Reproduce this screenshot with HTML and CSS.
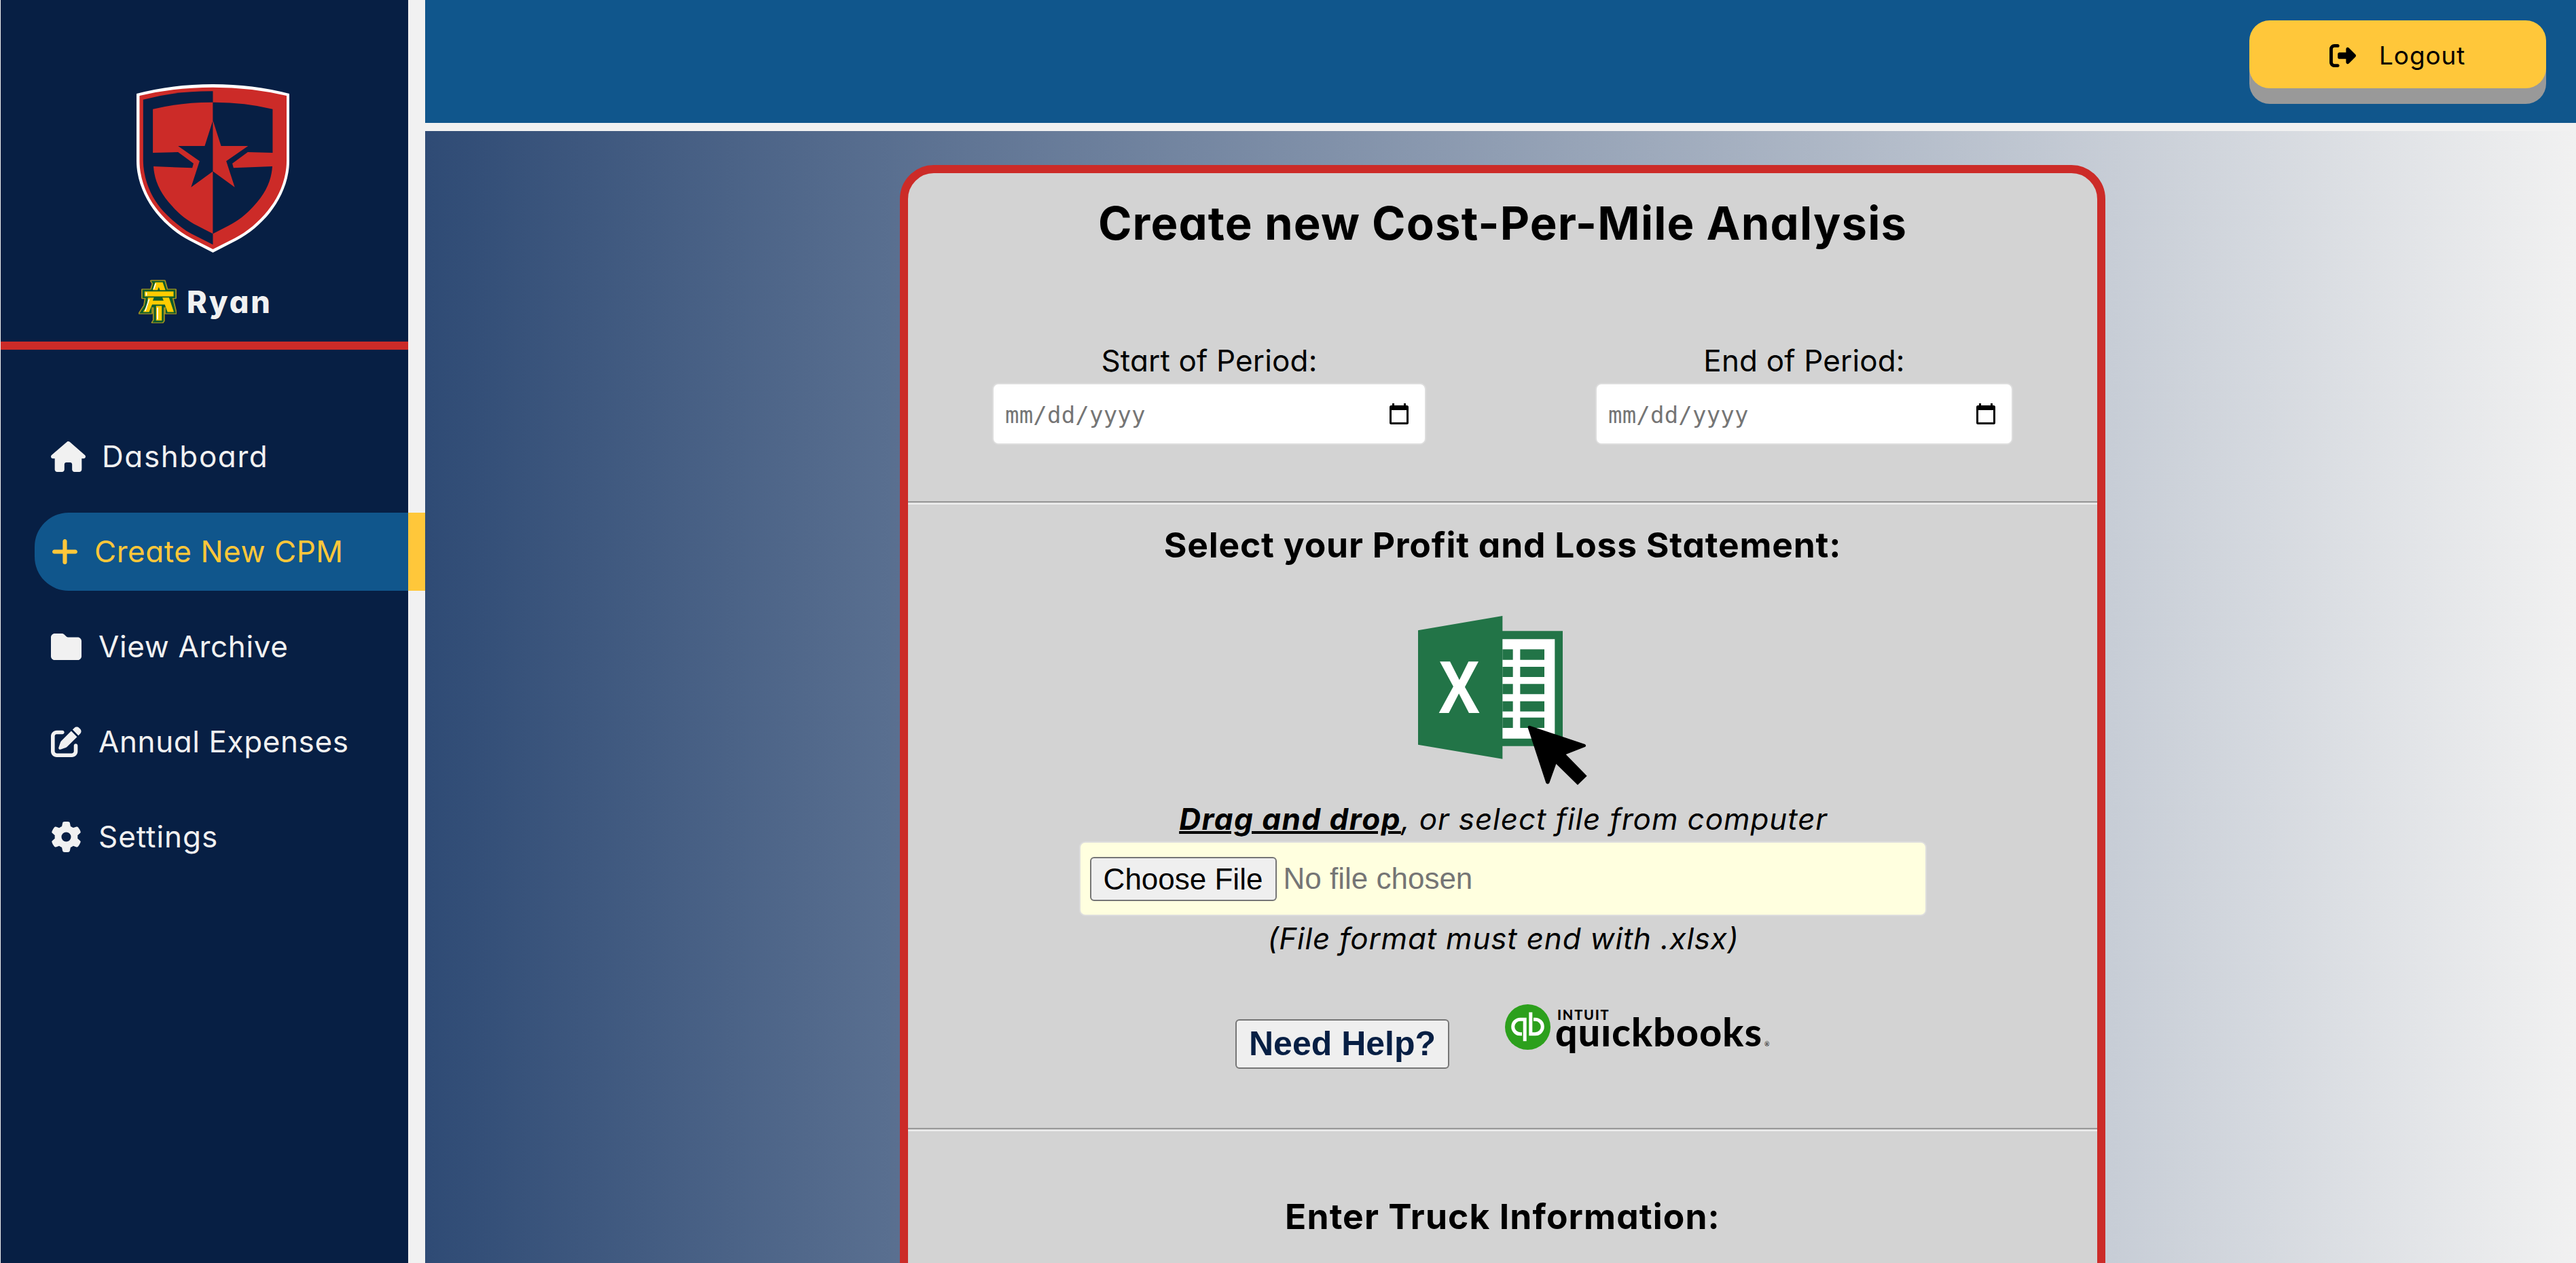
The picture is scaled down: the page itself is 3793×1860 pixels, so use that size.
FILE: index.html
```html
<!DOCTYPE html>
<html lang="en">
<head>
<meta charset="utf-8">
<title>Create new Cost-Per-Mile Analysis</title>
<link rel="stylesheet" href="styles.css">
</head>
<body>
<div class="app">
  <aside class="sidebar">
    <div class="brand">
      <svg class="shield" viewBox="450 132 504 744" preserveAspectRatio="none">
        <path fill="#fff" d="M450 174Q570 132 702 132Q834 132 954 174V470C954 560 925 640 890 700C860 750 820 795 780 822L702 876L624 822C584 795 544 750 514 700C479 640 450 560 450 470Z"/>
        <path fill="#cc2b28" d="M460 183Q575 146 702 146Q829 146 945 183V470C945 556 917 636 882 692C853 740 814 785 774 812L702 861L630 812C590 785 551 740 522 692C487 636 460 556 460 470Z"/>
        <path fill="#071f44" d="M472 200Q580 162 702 163V841L630 792C594 765 557 722 530 680C497 627 472 550 472 466Z"/>
        <path fill="#cc2b28" d="M504 242Q600 211 702 212V793L650 757C620 737 590 705 567 670C530 617 509 560 506 495L634 502L638 482L587 432L504 435Z"/>
        <path fill="#071f44" d="M899 242Q805 211 702 212V793L754 757C784 737 814 705 837 670C874 617 895 560 898 495L770 502L766 482L817 432L899 435Z"/>
        <path fill="#071f44" d="M702 292L675 405H587L658 472L630 587L702 517Z"/>
        <path fill="#cc2b28" d="M702 292L729 405H818L746 472L774 587L702 517Z"/>
      </svg>
      <div class="user">
        <svg class="team" viewBox="458 998 126 190" preserveAspectRatio="none">
          <g stroke="#a5921f" stroke-width="8" stroke-linejoin="round" fill="#0f5c2c">
            <path d="M500 1003H544L552 1041H580V1078H570L582 1145H548V1118H541V1178L537 1185H504L509 1175V1118H501V1145H461L478 1110L482 1078H471V1041H500L506 1015Z"/>
          </g>
          <path fill="#0f5c2c" d="M500 1003H544L552 1041H580V1078H570L582 1145H548V1118H541V1178L537 1185H504L509 1175V1118H501V1145H461L478 1110L482 1078H471V1041H500L506 1015Z"/>
          <path fill="#fc0" d="M513 1009H538L547 1043H529L525 1030L521 1043H505ZM478 1049H574V1071H478ZM489 1076H509L505 1089H541L537 1076H559L575 1139H554L545 1106H503L493 1139H473L487 1110ZM516 1112H535V1176H516Z"/>
          <path stroke="#fff" stroke-width="4" fill="none" d="M515 1014L508 1040M484 1053V1068M493 1083L480 1135M521 1120V1172"/>
        </svg>
        <span class="name"><span class="t">Ryan</span></span>
      </div>
    </div>
    <nav class="menu">
      <a class="item dash"><svg viewBox="0 0 576 512" preserveAspectRatio="none"><path d="M575.800 255.500c0 18-15 32.100-32 32.100h-32l.7 160.200c0 2.700-.2 5.400-.5 8.100V472c0 22.100-17.900 40-40 40h-16c-1.100 0-2.200 0-3.300-.1c-1.400 .1-2.800 .1-4.200 .1H392c-22.100 0-40-17.900-40-40v-88c0-17.700-14.300-32-32-32h-64c-17.700 0-32 14.300-32 32v88c0 22.100-17.900 40-40 40h-56c-1.500 0-3-.1-4.500-.2c-1.200 .1-2.400 .2-3.600 .2h-16c-22.100 0-40-17.900-40-40V360c0-.9 0-1.900 .1-2.800v-69.600H32c-18 0-32-14-32-32.100c0-9 3-17 10-24L266.400 8c7-7 15-8 22-8s15 2 21 7L564.800 231.500c8 7 12 15 11 24z"/></svg><span class="t">Dashboard</span></a>
      <a class="item active cpm"><svg viewBox="32 64 384 384" preserveAspectRatio="none"><path d="M256 96c0-17.700-14.300-32-32-32s-32 14.300-32 32v128H64c-17.700 0-32 14.300-32 32s14.300 32 32 32h128v128c0 17.700 14.300 32 32 32s32-14.300 32-32V288h128c17.700 0 32-14.300 32-32s-14.300-32-32-32H256V96z"/></svg><span class="t">Create New CPM</span></a>
      <a class="item arch"><svg viewBox="0 32 512 448" preserveAspectRatio="none"><path d="M64 480H448c35.300 0 64-28.700 64-64V160c0-35.300-28.700-64-64-64H298.500c-17 0-33.300-6.700-45.300-18.700L226.700 50.700C214.700 38.700 198.500 32 181.500 32H64C28.700 32 0 60.700 0 96V416c0 35.300 28.700 64 64 64z"/></svg><span class="t">View Archive</span></a>
      <a class="item ann"><svg viewBox="0 0 512 512"><path d="M471.600 21.700c-21.900-21.900-57.300-21.900-79.200 0L362.300 51.700l97.900 97.900 30.100-30.100c21.900-21.900 21.900-57.300 0-79.200L471.600 21.700zm-299.200 220c-6.100 6.100-10.800 13.600-13.500 21.900l-29.600 88.800c-2.900 8.600-.6 18.100 5.800 24.600s15.900 8.700 24.600 5.800l88.800-29.600c8.200-2.700 15.700-7.400 21.900-13.500L437.700 172.300 339.700 74.300 172.400 241.700zM96 64C43 64 0 107 0 160V416c0 53 43 96 96 96H352c53 0 96-43 96-96V320c0-17.700-14.300-32-32-32s-32 14.300-32 32v96c0 17.700-14.300 32-32 32H96c-17.700 0-32-14.300-32-32V160c0-17.700 14.300-32 32-32h96c17.700 0 32-14.300 32-32s-14.300-32-32-32H96z"/></svg><span class="t">Annual Expenses</span></a>
      <a class="item sett"><svg viewBox="0 0 512 512"><path d="M495.900 166.600c3.200 8.700 .5 18.400-6.400 24.600l-43.300 39.400c1.100 8.300 1.700 16.800 1.700 25.400s-.6 17.100-1.700 25.400l43.300 39.400c6.900 6.200 9.600 15.900 6.400 24.600c-4.400 11.900-9.700 23.300-15.800 34.300l-4.700 8.100c-6.600 11-14 21.400-22.100 31.200c-5.900 7.200-15.700 9.600-24.500 6.800l-55.700-17.700c-13.400 10.300-28.200 18.900-44 25.400l-12.500 57.100c-2 9.100-9 16.300-18.200 17.800c-13.800 2.300-28 3.500-42.500 3.500s-28.700-1.200-42.500-3.500c-9.200-1.500-16.200-8.700-18.200-17.800l-12.500-57.100c-15.800-6.500-30.600-15.100-44-25.400L83.100 425.900c-8.800 2.800-18.600 .3-24.500-6.800c-8.100-9.800-15.500-20.200-22.100-31.200l-4.700-8.100c-6.100-11-11.400-22.400-15.800-34.300c-3.200-8.700-.5-18.400 6.400-24.600l43.300-39.400C64.600 273.100 64 264.600 64 256s.6-17.100 1.700-25.400L22.400 191.200c-6.900-6.200-9.600-15.900-6.400-24.600c4.400-11.900 9.700-23.300 15.800-34.300l4.700-8.100c6.600-11 14-21.400 22.100-31.200c5.900-7.200 15.700-9.600 24.500-6.800l55.700 17.700c13.400-10.300 28.200-18.900 44-25.400l12.500-57.100c2-9.100 9-16.300 18.200-17.800C227.300 1.200 241.500 0 256 0s28.700 1.200 42.500 3.500c9.200 1.500 16.200 8.700 18.200 17.800l12.500 57.100c15.800 6.500 30.600 15.100 44 25.400l55.700-17.700c8.800-2.800 18.600-.3 24.500 6.800c8.100 9.800 15.500 20.200 22.100 31.200l4.700 8.100c6.100 11 11.400 22.400 15.800 34.300zM256 336a80 80 0 1 0 0-160 80 80 0 1 0 0 160z"/></svg><span class="t">Settings</span></a>
    </nav>
  </aside>
  <div class="main">
    <header class="topbar">
      <a class="logout"><svg viewBox="0 32 512 448" preserveAspectRatio="none"><path d="M502.600 278.600c12.500-12.500 12.500-32.800 0-45.300l-128-128c-9.200-9.200-22.900-11.900-34.900-6.900s-19.800 16.600-19.800 29.600v64H192c-17.700 0-32 14.300-32 32v64c0 17.700 14.300 32 32 32h128v64c0 12.900 7.800 24.600 19.800 29.600s25.700 2.200 34.900-6.900l128-128zM160 96c17.700 0 32-14.300 32-32s-14.300-32-32-32H96C43 32 0 75 0 128V384c0 53 43 96 96 96h64c17.700 0 32-14.300 32-32s-14.300-32-32-32H96c-17.700 0-32-14.300-32-32V128c0-17.700 14.300-32 32-32h64z"/></svg><span class="t">Logout</span></a>
    </header>
    <main class="content">
      <form class="card">
        <h1><span class="t">Create new Cost-Per-Mile Analysis</span></h1>
        <div class="period">
          <div class="field start"><label><span class="t">Start of Period:</span></label><div class="date"><span>mm/dd/yyyy</span><svg viewBox="0 0 28 31"><path fill-rule="evenodd" d="M4 0h3v3h14V0h3v3h1.500A2.500 2.500 0 0 1 28 5.500v23A2.500 2.500 0 0 1 25.500 31h-23A2.500 2.500 0 0 1 0 28.500v-23A2.500 2.500 0 0 1 2.500 3H4zM3 10v18h22V10z"/></svg></div></div>
          <div class="field end"><label><span class="t">End of Period:</span></label><div class="date"><span>mm/dd/yyyy</span><svg viewBox="0 0 28 31"><path fill-rule="evenodd" d="M4 0h3v3h14V0h3v3h1.500A2.500 2.500 0 0 1 28 5.500v23A2.500 2.500 0 0 1 25.500 31h-23A2.500 2.500 0 0 1 0 28.500v-23A2.500 2.500 0 0 1 2.500 3H4zM3 10v18h22V10z"/></svg></div></div>
        </div>
        <div class="rule"></div>
        <section class="statement">
          <h2 class="pl"><span class="t">Select your Profit and Loss Statement:</span></h2>
          <svg class="excel" viewBox="387 142 747 747">
            <path fill="#227447" d="M387 206L760 142V774L387 711ZM760 209H1026V717H760Z"/>
            <path fill="#fff" d="M760 245H991V684H760Z"/>
            <path fill="#227447" d="M760 290h46v46h-46zM838 290h107v46H838zM760 367h46v45h-46zM838 367h107v45H838zM760 443h46v45h-46zM838 443h107v45H838zM760 519h46v45h-46zM838 519h107v45H838zM760 591h46v46h-46zM838 591h107v46H838z"/>
            <text class="mark" transform="translate(479 571) scale(.84 1)">X</text>
            <path d="M880 627L1124 709Q1133 716 1124 721L1040 754L1133 849L1092 889L997 796L967 880Q960 889 952 880L872 636Q871 627 880 627Z"/>
          </svg>
          <p class="drag"><span class="t"><b>Drag and drop</b>, or select file from computer</span></p>
          <div class="file"><span class="choose">Choose File</span><span class="none">No file chosen</span></div>
          <p class="format"><span class="t">(File format must end with .xlsx)</span></p>
          <div class="help">
            <a class="need">Need Help?</a>
            <div class="qb">
              <svg viewBox="0 0 67 67"><circle cx="33.500" cy="33.500" r="33.500" fill="#2ca01c"/><path fill="none" stroke="#fff" stroke-width="5" d="M25 43.800h-2.500a10.800 10.800 0 0 1 0-21.600h6.700v32M42 22.200h2.500a10.800 10.800 0 0 1 0 21.600h-6.700v-32"/></svg>
              <div class="word"><span class="intuit"><span class="t">INTUIT</span></span><span class="quick"><span class="t">quıckbooks</span><small>®</small></span></div>
            </div>
          </div>
        </section>
        <div class="rule"></div>
        <h2 class="truck"><span class="t">Enter Truck Information:</span></h2>
      </form>
    </main>
  </div>
</div>
</body>
</html>
```
FILE: styles.css
```css
* { box-sizing: border-box; }
body { margin: 0; background: #f1f1f1; font-family: Inter, "Open Sans", sans-serif; font-feature-settings: "cv11" 1; font-size: 44px; line-height: 66px; color: #000; overflow: hidden; }
h1, h2, p { margin: 0; }
svg { display: block; flex: none; }
.t { white-space: nowrap; }
.app { display: flex; height: 1860px; padding-left: 1px; overflow: hidden; }

.sidebar { width: 625px; border-right: 25px solid #f1f1f1; background: #071f44; flex: none; }
.brand { height: 515px; border-bottom: 12px solid #cc2b28; padding-top: 124px; display: flex; flex-direction: column; align-items: center; }
.shield { width: 225px; height: 248px; margin-left: 24px; }
.user { display: flex; align-self: flex-start; margin: 40px 0 0 203px; gap: 15px; align-items: center; height: 64px; }
.team { width: 56px; height: 64px; }
.name { font-weight: 800; font-size: 45px; letter-spacing: 2.9px; color: #f1f1f1; margin-top: 2px; }

.menu { margin-top: 100px; display: flex; flex-direction: column; gap: 25px; color: #f1f1f1; }
.item { height: 115px; display: flex; align-items: center; margin-left: 50px; padding-left: 24px; border-radius: 50px 0 0 50px; font-size: 44px; }
.item svg { fill: currentColor; width: 45px; height: 45px; margin-right: 25px; }
.item.active { margin-right: -25px; background: #10568c; color: #ffc73a; border-right: 25px solid #ffc73a; }
.item.dash svg { width: 51px; margin-right: 24px; }
.item.cpm svg { width: 37px; height: 37px; margin-left: 2px; margin-right: 25px; }
.item.arch svg { height: 39px; }
.dash { letter-spacing: 1.6px; }
.cpm { letter-spacing: .55px; }
.arch { letter-spacing: .65px; }
.ann { letter-spacing: .6px; }
.sett { letter-spacing: .95px; }
.item .t { margin-top: -1px; }

.main { flex: 1; display: flex; flex-direction: column; }
.topbar { height: 193px; flex: none; background: #10568c; border-bottom: 12px solid #f1f1f1; display: flex; justify-content: flex-end; padding: 30px 44px 0 0; }
.logout { width: 437px; height: 100px; border-radius: 30px; background: #ffc73a; box-shadow: 0 23px 0 #999; display: flex; align-items: center; padding: 4px 0 0 118px; font-size: 37px; letter-spacing: .9px; }
.logout svg { width: 39px; height: 34px; margin-right: 34px; }

.content { flex: 1; padding: 50px 0 0 699px; background: linear-gradient(90deg, #2f4b75, #f1f1f1); }
.card { width: 1775px; height: 1700px; border: 12px solid #cc2b28; border-radius: 50px; background: #d3d3d3; text-align: center; }
h1 { font-size: 67px; line-height: 94px; letter-spacing: 1.15px; padding-top: 27px; height: 231px; }
.period { display: flex; justify-content: space-between; height: 252px; padding: 0 124px 0 124px; }
.field { width: 639px; padding-top: 12px; height: 170px; }
.end { width: 615px; }
.field label { display: block; height: 66px; letter-spacing: .15px; }
.date { height: 91px; border: 2px solid #ddd; border-radius: 9px; background: #fff; display: flex; align-items: center; justify-content: space-between; padding: 0 24px 0 17px; color: #757575; font: 34px "DejaVu Sans Mono", monospace; }
.date span { margin-top: 3px; letter-spacing: .2px; }
.date svg { width: 28px; height: 31px; fill: #000; }
.rule { height: 5px; border-top: 2px solid #999; border-bottom: 2px solid #eee; }
.statement { height: 918px; display: flex; flex-direction: column; align-items: center; }
h2 { font-size: 51.5px; line-height: 74px; }
.pl { margin: 22px 0 2px; letter-spacing: .8px; }
.excel { width: 249px; height: 249px; margin-top: 66px; }
.mark { font: 700 320px "Open Sans", sans-serif; fill: #fff; }
.drag, .format { font-style: italic; padding-left: 2px; }
.drag { margin-top: 17px; height: 66px; letter-spacing: .9px; }
.drag b { letter-spacing: 1.5px; text-decoration: underline; text-decoration-thickness: 4px; }
.format { letter-spacing: .8px; }
.file { width: 1248px; height: 110px; border: 2px solid #ddd; border-radius: 9px; background: #ffffdf; display: flex; align-items: center; gap: 10px; padding-left: 14px; font-family: "Liberation Sans", sans-serif; color: #757575; }
.choose { width: 275px; height: 65px; line-height: 61px; border: 2px solid #767676; border-radius: 6px; background: #efefef; color: #000; text-align: center; }
.help { display: flex; align-self: stretch; height: 95px; margin-top: 64px; padding-left: 482px; }
.need { width: 315px; height: 73px; margin-top: 22px; line-height: 69px; border: 2px solid #767676; border-radius: 6px; background: #efefef; color: #071f44; font-family: "Liberation Sans", sans-serif; font-weight: 700; font-size: 50px; }
.qb { display: flex; margin-left: 82px; }
.qb > svg { width: 67px; height: 67px; }
.word { display: flex; flex-direction: column; align-items: flex-start; margin-left: 7px; }
.intuit { font: 900 20px/20px Lato, sans-serif; letter-spacing: 1.8px; margin: 5px 0 0 3px; height: 20px; }
.quick { font: 900 57px/60px Lato, sans-serif; letter-spacing: 1.2px; margin-top: -15px; display: flex; align-items: baseline; }
.quick small { font-size: 9px; font-weight: 400; margin-left: 3px; line-height: 9px; }
.truck { margin-top: 88px; letter-spacing: 1.1px; }
```
